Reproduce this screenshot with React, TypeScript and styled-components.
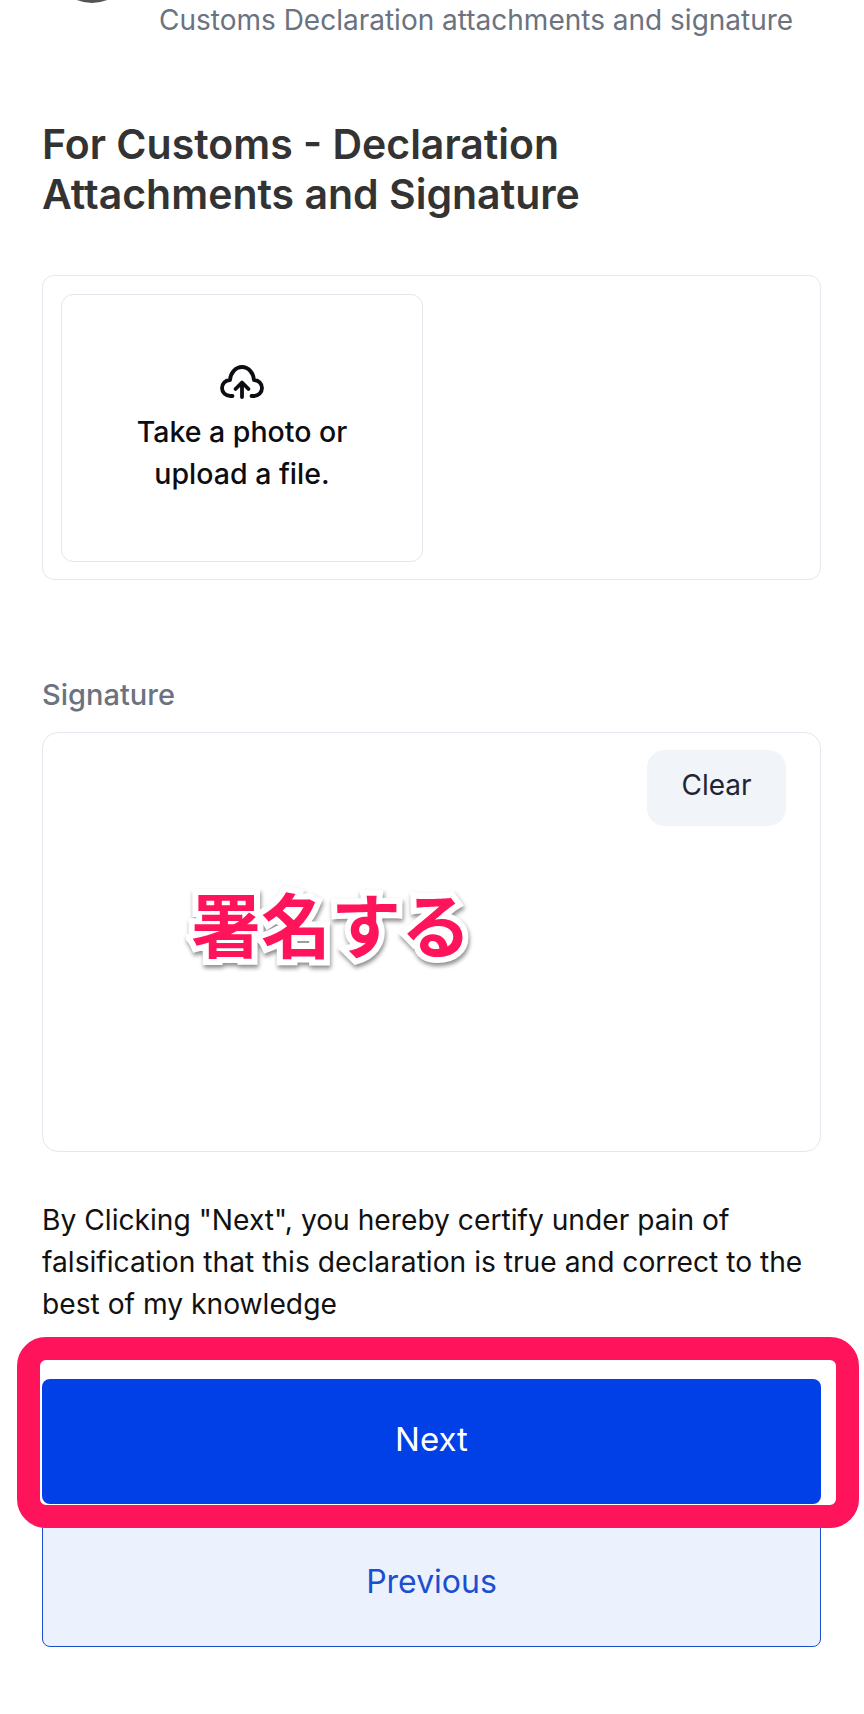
import React from 'react'
import styled, { createGlobalStyle } from 'styled-components'

const GlobalStyle = createGlobalStyle`
  html, body {
    margin: 0;
    padding: 0;
    background: #fff;
  }
`

function CloudUpload() {
  return (
    <svg width="44" height="34" viewBox="0 0 44 34" fill="none" stroke="#0b0d12" strokeWidth="3.8" strokeLinecap="round" strokeLinejoin="round">
      <path d="M12.500 31H10.500C5.500 31 2 27.500 2 23C2 18.500 5.500 15 10 15C10.500 8 15.500 2 22 2C28.500 2 33.500 8 34 15C38.500 15 42 18.500 42 23C42 27.500 38.500 31 33.500 31H31.500" />
      <path d="M22 32V18M15.500 24L22 17.500L28.500 24" />
    </svg>
  )
}

export default function App() {
  return (
    <>
      <GlobalStyle />
      <Page>
        <AvatarEdge />
        <StepCaption>Customs Declaration attachments and signature</StepCaption>
        <Content>
          <Title>
            For Customs - Declaration
            <br />
            Attachments and Signature
          </Title>
          <UploadPanel>
            <UploadTile>
              <CloudUpload />
              <UploadText>
                Take a photo or
                <br />
                upload a file.
              </UploadText>
            </UploadTile>
          </UploadPanel>
          <FieldLabel>Signature</FieldLabel>
          <SignaturePad>
            <ClearButton>Clear</ClearButton>
            <SignCallout>署名する</SignCallout>
          </SignaturePad>
          <Certify>
            By Clicking "Next", you hereby certify under pain of falsification that this declaration is true and
            correct to the best of my knowledge
          </Certify>
          <NextWrap>
            <NextFrame />
            <NextButton>Next</NextButton>
          </NextWrap>
          <PreviousButton>Previous</PreviousButton>
        </Content>
      </Page>
    </>
  )
}

const Page = styled.div`
  position: relative;
  width: 864px;
  height: 1714px;
  overflow: hidden;
  background: #fff;
  font-family: 'Inter', 'Noto Sans CJK JP', sans-serif;
`

const AvatarEdge = styled.div`
  position: absolute;
  left: 52px;
  top: -77px;
  width: 80px;
  height: 80px;
  border-radius: 50%;
  background: #555;
`

const StepCaption = styled.div`
  padding: 3px 0 0 159px;
  font-size: 28px;
  line-height: 34px;
  color: #6b7280;
`

const Content = styled.div`
  display: flex;
  flex-direction: column;
  padding: 0 43px 0 42px;
`

const Title = styled.h1`
  margin: 82px 0 0;
  font-size: 41px;
  line-height: 50px;
  font-weight: 600;
  color: #333;
`

const UploadPanel = styled.div`
  margin-top: 56px;
  height: 305px;
  box-sizing: border-box;
  padding: 18px;
  border: 1.5px solid #e3e7ee;
  border-radius: 12px;
`

const UploadTile = styled.div`
  width: 362px;
  height: 268px;
  box-sizing: border-box;
  display: flex;
  flex-direction: column;
  align-items: center;
  justify-content: center;
  gap: 12px;
  padding-top: 3px;
  border: 1.5px solid #e3e7ee;
  border-radius: 12px;
`

const UploadText = styled.div`
  font-size: 28.5px;
  line-height: 42px;
  font-weight: 500;
  text-align: center;
  color: #0b0d12;
`

const FieldLabel = styled.div`
  margin-top: 97px;
  font-size: 29px;
  line-height: 36px;
  font-weight: 500;
  color: #6b7280;
`

const SignaturePad = styled.div`
  position: relative;
  margin-top: 19px;
  height: 420px;
  box-sizing: border-box;
  display: flex;
  justify-content: flex-end;
  align-items: flex-start;
  padding: 17px 34px;
  border: 1.5px solid #e3e7ee;
  border-radius: 16px;
`

const ClearButton = styled.button`
  width: 139px;
  height: 76px;
  padding: 0 0 6px;
  border: 0;
  border-radius: 18px;
  background: #f1f4f9;
  font-family: inherit;
  font-size: 28px;
  color: #1e2533;
`

const SignCallout = styled.div`
  position: absolute;
  left: 148px;
  top: 148px;
  font-family: 'Noto Sans CJK JP', sans-serif;
  font-size: 70px;
  line-height: 84px;
  font-weight: 700;
  color: #ff135a;
  -webkit-text-stroke: 12px #fff;
  paint-order: stroke fill;
  filter: drop-shadow(1px 3px 2px rgba(0, 0, 0, 0.45));
`

const Certify = styled.p`
  margin: 47px 0 0;
  font-size: 28.2px;
  line-height: 42px;
  color: #111;
`

const NextWrap = styled.div`
  position: relative;
  margin-top: 54px;
`

const NextFrame = styled.div`
  position: absolute;
  left: -25px;
  right: -38px;
  top: -42px;
  bottom: -24px;
  border: 23px solid #ff135a;
  border-radius: 29px;
  z-index: 1;
`

const NextButton = styled.button`
  display: block;
  width: 100%;
  height: 125px;
  padding: 0 0 6px;
  border: 0;
  border-radius: 8px;
  background: #0040e6;
  font-family: inherit;
  font-size: 33px;
  color: #fff;
`

const PreviousButton = styled.button`
  margin-top: 17px;
  height: 126px;
  padding: 0 0 6px;
  border: 1.5px solid #1a4fd0;
  border-radius: 8px;
  background: #ecf1fe;
  font-family: inherit;
  font-size: 32px;
  color: #1a4fd0;
`
